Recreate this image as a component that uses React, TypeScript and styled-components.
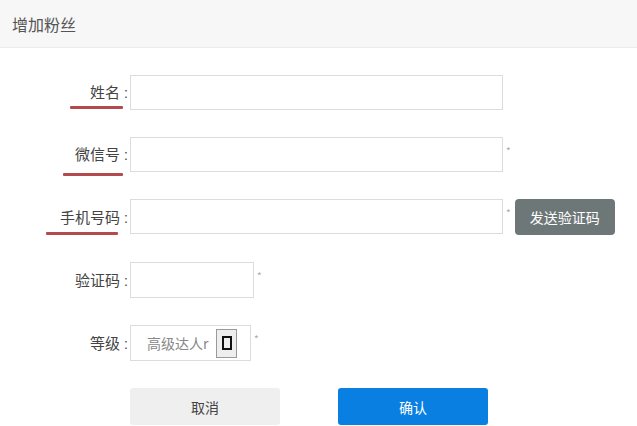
import React from "react"
import styled, { createGlobalStyle } from "styled-components"

const GlobalStyle = createGlobalStyle`
    html, body {
        margin: 0;
        padding: 0;
        background: #fff;
    }
    body {
        font-family: "Noto Sans CJK SC", "Noto Sans", "Liberation Sans", sans-serif;
        color: #444;
    }
`

const Page = styled.div`
    width: 637px;
    height: 426px;
    overflow: hidden;
    background: #fff;
`

const Header = styled.div`
    height: 47px;
    display: flex;
    align-items: center;
    padding-left: 12px;
    background: #f7f7f7;
    border-bottom: 1px solid #ececec;
    font-size: 16px;
    color: #555;
`

const Form = styled.form`
    display: flex;
    flex-direction: column;
    gap: 27px;
    padding-top: 27px;
`

const Row = styled.div`
    display: grid;
    grid-template-columns: 130px auto;
    align-items: center;
`

const Label = styled.label<{ $markRight?: number; $markWidth?: number; $markTop?: number }>`
    position: relative;
    justify-self: end;
    padding-right: 2px;
    font-size: 15px;
    line-height: 20px;
    color: #444;
    white-space: nowrap;

    &::after {
        content: '';
        display: ${p => (p.$markWidth ? 'block' : 'none')};
        position: absolute;
        right: ${p => p.$markRight ?? 0}px;
        top: ${p => p.$markTop ?? 22}px;
        width: ${p => p.$markWidth ?? 0}px;
        height: 3px;
        border-radius: 1px;
        background: #b24a4e;
    }
`

const Colon = styled.span`
    margin-left: 4px;
    font-family: "Liberation Sans", sans-serif;
    font-size: 14px;
`

const Field = styled.div`
    display: flex;
    align-items: flex-start;
`

const Input = styled.div<{ $w: number; $h?: number }>`
    width: ${p => p.$w}px;
    height: ${p => (p.$h ?? 35) - 2}px;
    border: 1px solid #dcdcdc;
    background: #fff;
`

const Star = styled.span`
    margin-left: 3px;
    margin-top: 9px;
    font-size: 10px;
    line-height: 10px;
    color: #aaa;
`

const SendButton = styled.button`
    margin-left: 4px;
    width: 100px;
    height: 36px;
    border: none;
    border-radius: 4px;
    background: #6e7777;
    color: #fff;
    font-family: inherit;
    font-size: 14px;
`

const Select = styled.div`
    width: 121px;
    height: 36px;
    box-sizing: border-box;
    border: 1px solid #dcdcdc;
    display: flex;
    align-items: center;
    justify-content: space-between;
    padding: 0 13px 0 16px;
`

const SelectText = styled.span`
    width: 68px;
    overflow: hidden;
    white-space: nowrap;
    font-size: 14px;
    color: #888;
`

const Caret = styled.span`
    width: 21px;
    height: 29px;
    box-sizing: border-box;
    border: 1px solid #9a9a9a;
    background: #eeeeee;
    display: flex;
    align-items: center;
    justify-content: center;

    &::before {
        content: '';
        width: 6px;
        height: 10px;
        border: 2px solid #111;
    }
`

const Actions = styled.div`
    display: flex;
    gap: 58px;
    padding-left: 130px;
`

const Btn = styled.button<{ $primary?: boolean }>`
    width: 150px;
    height: 37px;
    border: none;
    border-radius: 3px;
    font-family: inherit;
    font-size: 14px;
    background: ${p => (p.$primary ? '#0a7fe2' : '#efefef')};
    color: ${p => (p.$primary ? '#fff' : '#444')};
`

export default function App() {
    return (
        <Page>
            <GlobalStyle />
            <Header>增加粉丝</Header>
            <Form>
                <Row>
                    <Label $markRight={7} $markWidth={53} $markTop={24}>姓名<Colon>:</Colon></Label>
                    <Field>
                        <Input $w={371} />
                    </Field>
                </Row>
                <Row>
                    <Label $markRight={7} $markWidth={60} $markTop={29}>微信号<Colon>:</Colon></Label>
                    <Field>
                        <Input $w={371} />
                        <Star>*</Star>
                    </Field>
                </Row>
                <Row>
                    <Label $markRight={12} $markWidth={72} $markTop={25}>手机号码<Colon>:</Colon></Label>
                    <Field>
                        <Input $w={371} />
                        <Star>*</Star>
                        <SendButton type="button">发送验证码</SendButton>
                    </Field>
                </Row>
                <Row>
                    <Label>验证码<Colon>:</Colon></Label>
                    <Field>
                        <Input $w={122} $h={36} />
                        <Star>*</Star>
                    </Field>
                </Row>
                <Row>
                    <Label>等级<Colon>:</Colon></Label>
                    <Field>
                        <Select>
                            <SelectText>高级达人r</SelectText>
                            <Caret />
                        </Select>
                        <Star>*</Star>
                    </Field>
                </Row>
                <Actions>
                    <Btn type="button">取消</Btn>
                    <Btn type="button" $primary>确认</Btn>
                </Actions>
            </Form>
        </Page>
    )
}
